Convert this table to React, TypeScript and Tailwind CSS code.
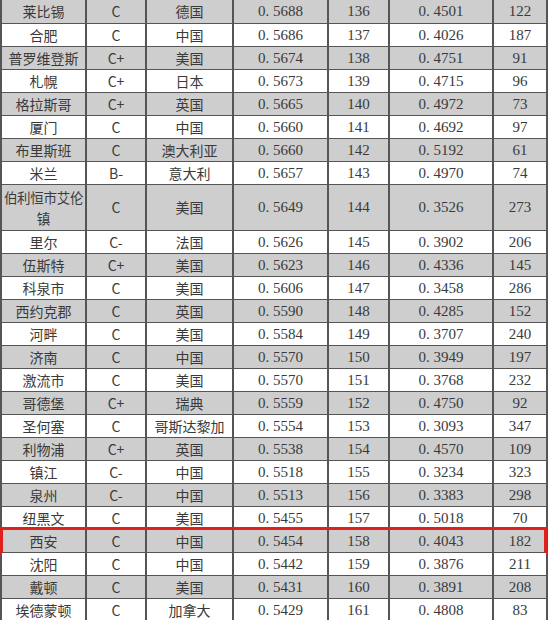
import React from 'react'

type Row = [string, string, string, string, string, string, string]

const rows: Row[] = [
  ['莱比锡', 'C', '德国', '0.5688', '136', '0.4501', '122'],
  ['合肥', 'C', '中国', '0.5686', '137', '0.4026', '187'],
  ['普罗维登斯', 'C+', '美国', '0.5674', '138', '0.4751', '91'],
  ['札幌', 'C+', '日本', '0.5673', '139', '0.4715', '96'],
  ['格拉斯哥', 'C+', '英国', '0.5665', '140', '0.4972', '73'],
  ['厦门', 'C', '中国', '0.5660', '141', '0.4692', '97'],
  ['布里斯班', 'C', '澳大利亚', '0.5660', '142', '0.5192', '61'],
  ['米兰', 'B-', '意大利', '0.5657', '143', '0.4970', '74'],
  ['伯利恒市艾伦镇', 'C', '美国', '0.5649', '144', '0.3526', '273'],
  ['里尔', 'C-', '法国', '0.5626', '145', '0.3902', '206'],
  ['伍斯特', 'C+', '美国', '0.5623', '146', '0.4336', '145'],
  ['科泉市', 'C', '美国', '0.5606', '147', '0.3458', '286'],
  ['西约克郡', 'C', '英国', '0.5590', '148', '0.4285', '152'],
  ['河畔', 'C', '美国', '0.5584', '149', '0.3707', '240'],
  ['济南', 'C', '中国', '0.5570', '150', '0.3949', '197'],
  ['激流市', 'C', '美国', '0.5570', '151', '0.3768', '232'],
  ['哥德堡', 'C+', '瑞典', '0.5559', '152', '0.4750', '92'],
  ['圣何塞', 'C', '哥斯达黎加', '0.5554', '153', '0.3093', '347'],
  ['利物浦', 'C+', '英国', '0.5538', '154', '0.4570', '109'],
  ['镇江', 'C-', '中国', '0.5518', '155', '0.3234', '323'],
  ['泉州', 'C-', '中国', '0.5513', '156', '0.3383', '298'],
  ['纽黑文', 'C', '美国', '0.5455', '157', '0.5018', '70'],
  ['西安', 'C', '中国', '0.5454', '158', '0.4043', '182'],
  ['沈阳', 'C', '中国', '0.5442', '159', '0.3876', '211'],
  ['戴顿', 'C', '美国', '0.5431', '160', '0.3891', '208'],
  ['埃德蒙顿', 'C', '加拿大', '0.5429', '161', '0.4808', '83'],
]

const cjk = "font-['Noto_Sans_CJK_SC',sans-serif]"
const serif = "font-['Liberation_Serif',serif]"

function fmt(v: string) {
  return v.startsWith('0.') ? v.replace('0.', '0. ') : v
}

export default function App() {
  return (
    <div className="w-[550px] h-[620px] overflow-hidden bg-white">
      <div className="w-[548px] border-l-2 border-r-2 border-[#555] text-[#3a3a3a]">
        {rows.map((r, i) => {
          const grey = i % 2 === 0
          const tall = r[0] === '伯利恒市艾伦镇'
          const marked = r[0] === '西安'
          return (
            <div
              key={r[0]}
              className={`relative flex ${tall ? 'h-[46px]' : 'h-[23px]'} ${i > 0 ? 'border-t border-[#555]' : ''} ${
                grey ? 'bg-[#cecece]' : 'bg-white'
              }`}
            >
              <div className={`w-[83px] flex items-center justify-center text-center text-[14px] ${cjk}`}>
                {tall ? (
                  <span className="flex flex-col items-center text-[13.5px] leading-[21px]">
                    <span className="whitespace-nowrap tracking-[-0.3px]">伯利恒市艾伦</span>
                    <span>镇</span>
                  </span>
                ) : (
                  r[0]
                )}
              </div>
              <div className={`w-[60px] border-l-2 border-[#555] flex items-center justify-center text-[14px] ${cjk}`}>
                {r[1]}
              </div>
              <div className={`w-[87px] border-l-2 border-[#555] flex items-center justify-center text-[14px] ${cjk}`}>
                {r[2]}
              </div>
              <div className={`w-[95px] border-l-2 border-[#555] flex items-center justify-center text-[15px] ${serif}`}>
                {fmt(r[3])}
              </div>
              <div className={`w-[61px] border-l-2 border-[#555] flex items-center justify-center text-[15px] ${serif}`}>
                {r[4]}
              </div>
              <div className={`w-[104px] border-l-2 border-[#555] flex items-center justify-center text-[15px] ${serif}`}>
                {fmt(r[5])}
              </div>
              <div className={`flex-1 border-l-2 border-[#555] flex items-center justify-center text-[15px] ${serif}`}>
                {r[6]}
              </div>
              {marked && (
                <div className="absolute -left-[2px] w-[547px] -top-[3px] -bottom-[3px] border-[3px] border-[#e0201c] pointer-events-none" />
              )}
            </div>
          )
        })}
      </div>
    </div>
  )
}
